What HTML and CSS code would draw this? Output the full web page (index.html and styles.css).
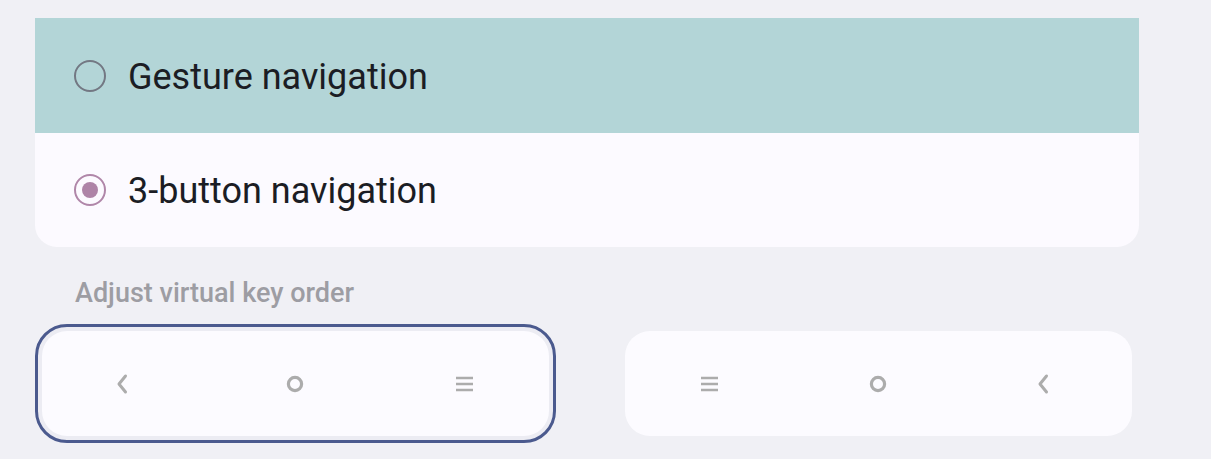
FILE: index.html
```html
<!DOCTYPE html>
<html>
<head>
<meta charset="utf-8">
<link rel="stylesheet" href="styles.css">
</head>
<body>
<div class="page">
  <div class="card">
    <div class="option option-active">
      <span class="radio"></span>
      <span class="option-text">Gesture navigation</span>
    </div>
    <div class="option">
      <span class="radio radio-on"><span class="dot"></span></span>
      <span class="option-text">3-button navigation</span>
    </div>
  </div>
  <div class="label">Adjust virtual key order</div>
  <div class="keys">
    <div class="key-wrap key-selected">
      <div class="key-box">
        <div class="key"><svg width="24" height="24" viewBox="0 0 24 24"><path d="M10.5 4 L4 12 L10.5 20" fill="none" stroke="#acacac" stroke-width="3" stroke-linecap="round" stroke-linejoin="round"/></svg></div>
        <div class="key"><svg width="24" height="24" viewBox="0 0 24 24"><circle cx="11" cy="12" r="6.6" fill="none" stroke="#acacac" stroke-width="3.2"/></svg></div>
        <div class="key"><svg width="24" height="24" viewBox="0 0 24 24"><path d="M3 6 H20 M3 12 H20 M3 18 H20" fill="none" stroke="#acacac" stroke-width="2.4"/></svg></div>
      </div>
    </div>
    <div class="key-wrap">
      <div class="key-box">
        <div class="key"><svg width="24" height="24" viewBox="0 0 24 24"><path d="M3 6 H20 M3 12 H20 M3 18 H20" fill="none" stroke="#acacac" stroke-width="2.4"/></svg></div>
        <div class="key"><svg width="24" height="24" viewBox="0 0 24 24"><circle cx="11" cy="12" r="6.6" fill="none" stroke="#acacac" stroke-width="3.2"/></svg></div>
        <div class="key"><svg width="24" height="24" viewBox="0 0 24 24"><path d="M10.5 4 L4 12 L10.5 20" fill="none" stroke="#acacac" stroke-width="3" stroke-linecap="round" stroke-linejoin="round"/></svg></div>
      </div>
    </div>
  </div>
</div>
</body>
</html>
```

FILE: styles.css
```css
html, body {
  margin: 0;
  padding: 0;
  background: #f0f0f5;
  font-family: Roboto, "Liberation Sans", sans-serif;
}
.page {
  width: 1104px;
  padding: 18px 0 0 35px;
}
.card {
  background: #fcfaff;
  border-radius: 0 0 22px 22px;
  overflow: hidden;
}
.option {
  height: 114px;
  display: flex;
  align-items: center;
  padding-left: 39px;
}
.option-active {
  height: 115px;
  background: #b3d5d7;
}
.radio {
  width: 28px;
  height: 28px;
  border: 2px solid #737883;
  border-radius: 50%;
  box-sizing: content-box;
  display: flex;
  align-items: center;
  justify-content: center;
  margin-right: 22px;
  flex: none;
}
.radio-on {
  border-color: #b087a9;
}
.dot {
  width: 16px;
  height: 16px;
  border-radius: 50%;
  background: #ae84a7;
}
.option-text {
  font-size: 36px;
  line-height: 42px;
  color: #1b1d24;
  padding-top: 2px;
}
.label {
  font-size: 27px;
  line-height: 32px;
  font-weight: 500;
  color: #9d9da3;
  padding: 30px 0 0 40px;
  height: 47px;
}
.keys {
  display: grid;
  grid-template-columns: 521px 521px;
  column-gap: 62px;
}
.key-wrap {
  padding: 4px;
  border-radius: 32px;
  border: 3px solid transparent;
  box-sizing: border-box;
  height: 119px;
}
.key-selected {
  border-color: #4b5a8e;
  background: #ececf3;
}
.key-box {
  background: #fcfbff;
  border-radius: 25px;
  height: 105px;
  display: grid;
  grid-template-columns: 1fr 1fr 1fr;
  align-items: center;
  justify-items: center;
}
.key svg {
  display: block;
}
```
